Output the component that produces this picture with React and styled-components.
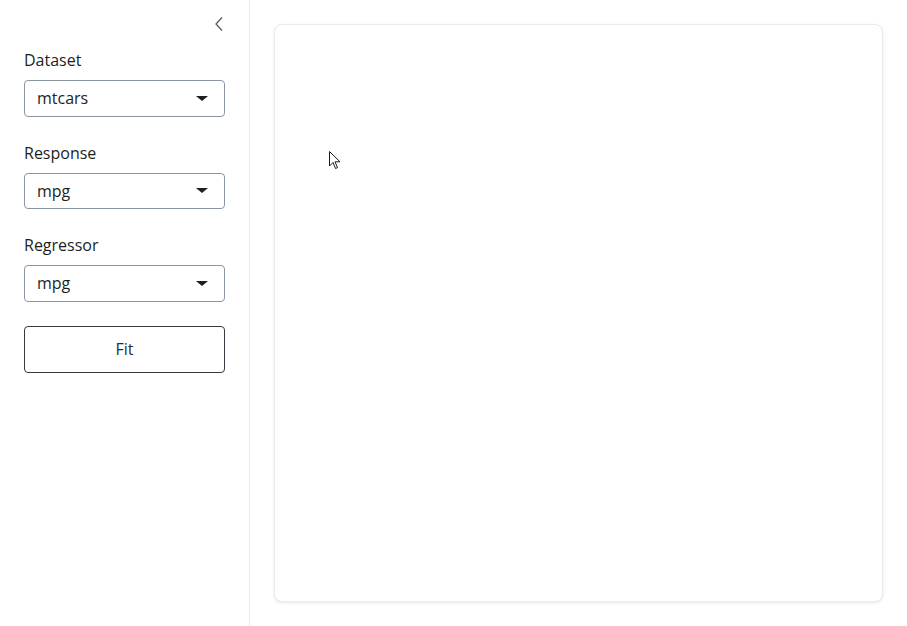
import React from "react";
import styled, { createGlobalStyle } from "styled-components";

const GlobalStyle = createGlobalStyle`
  html, body {
    margin: 0;
    padding: 0;
    background: #ffffff;
  }
  body {
    font-family: "Open Sans", "Noto Sans", sans-serif;
    font-size: 16px;
    color: #1d1f21;
  }
  * {
    box-sizing: border-box;
  }
`;

const Layout = styled.div`
  display: grid;
  grid-template-columns: 250px 1fr;
  width: 907px;
  height: 626px;
  background: #ffffff;
`;

const Sidebar = styled.aside`
  display: flex;
  flex-direction: column;
  padding: 12px 24px 24px;
  border-right: 1px solid #e9eaec;
`;

const ToggleRow = styled.div`
  display: flex;
  justify-content: flex-end;
  align-items: center;
  height: 24px;
  margin-bottom: 12px;
  padding-right: 1px;
`;

const Field = styled.div`
  display: flex;
  flex-direction: column;
  margin-bottom: 24px;
`;

const Label = styled.label`
  line-height: 24px;
  margin-bottom: 8px;
  color: #1d1f21;
`;

const Select = styled.div`
  display: flex;
  align-items: center;
  justify-content: space-between;
  height: 36.5px;
  padding: 0 16px 0 12px;
  border: 1px solid #8c96a2;
  border-radius: 4px;
  color: #1d1f21;
  background: #ffffff;
`;

const Caret = styled.span`
  width: 0;
  height: 0;
  border-left: 6px solid transparent;
  border-right: 6px solid transparent;
  border-top: 5px solid #1d1f21;
`;

const Button = styled.button`
  height: 47px;
  width: 100%;
  border: 1px solid #343a40;
  border-radius: 4px;
  background: #ffffff;
  font-family: inherit;
  font-size: 16px;
  color: #1d2d3e;
  cursor: pointer;
`;

const Main = styled.main`
  display: flex;
  padding: 24px;
  position: relative;
`;

const Card = styled.div`
  flex: 1;
  border: 1px solid #ebebeb;
  border-radius: 8px;
  background: #ffffff;
  box-shadow: 0 1px 3px rgba(0, 0, 0, 0.1);
`;

const Cursor = styled.svg`
  position: absolute;
  left: 79px;
  top: 151px;
`;

const SelectField = ({ label, value }) => (
  <Field>
    <Label>{label}</Label>
    <Select>
      <span>{value}</span>
      <Caret />
    </Select>
  </Field>
);

export default function App() {
  return (
    <>
      <GlobalStyle />
      <Layout>
        <Sidebar>
          <ToggleRow>
            <svg width="10" height="16" viewBox="0 0 10 16" fill="none">
              <path d="M8 1.5 L2 8 L8 14.5" stroke="#555b61" strokeWidth="1.3" />
            </svg>
          </ToggleRow>
          <SelectField label="Dataset" value="mtcars" />
          <SelectField label="Response" value="mpg" />
          <SelectField label="Regressor" value="mpg" />
          <Button>Fit</Button>
        </Sidebar>
        <Main>
          <Card />
          <Cursor width="13" height="20" viewBox="0 0 13 20">
            <path
              d="M0.5 0.5 L0.5 15 L4 11.5 L6.5 17.5 L8.5 16.6 L6 10.8 L11 10.8 Z"
              fill="#ffffff"
              stroke="#1a1a1a"
              strokeWidth="1"
              strokeLinejoin="miter"
            />
          </Cursor>
        </Main>
      </Layout>
    </>
  );
}
